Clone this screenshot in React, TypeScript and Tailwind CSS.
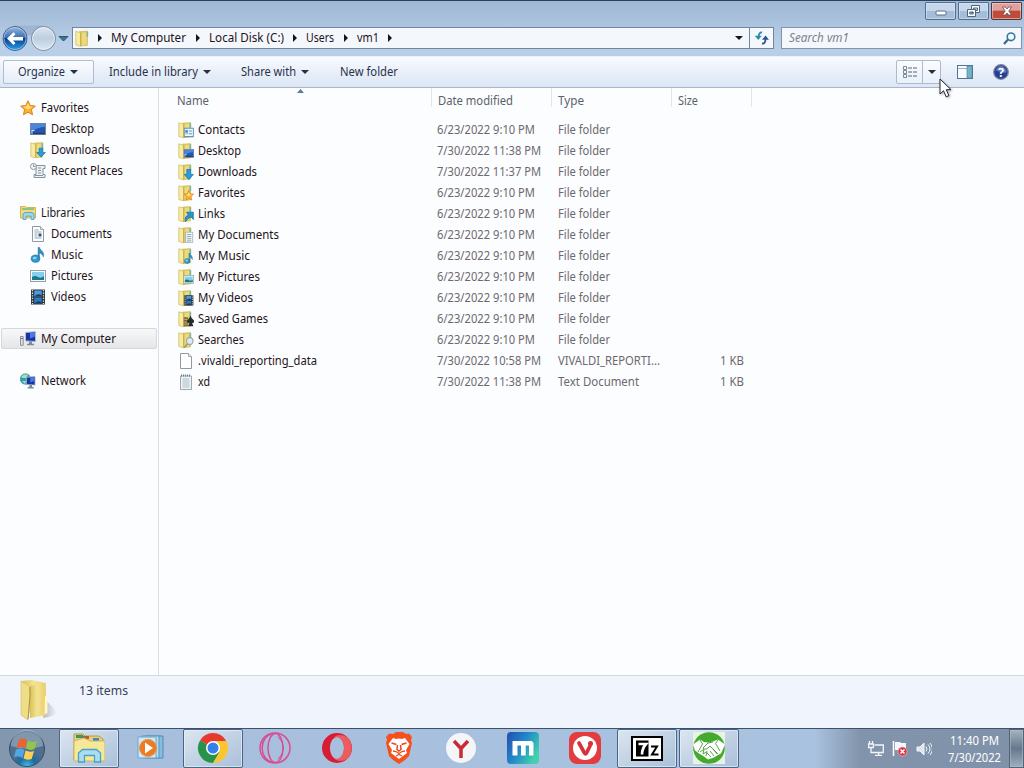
import type { ReactNode } from 'react'

type IconName =
  | 'contacts' | 'desktop' | 'downloads' | 'favorites' | 'links' | 'documents' | 'music'
  | 'pictures' | 'videos' | 'games' | 'searches' | 'blank' | 'text'

const files: { name: string; date: string; type: string; size?: string; icon: IconName; w: string }[] = [
  { name: 'Contacts', date: '6/23/2022 9:10 PM', type: 'File folder', icon: 'contacts', w: '47' },
  { name: 'Desktop', date: '7/30/2022 11:38 PM', type: 'File folder', icon: 'desktop', w: '43' },
  { name: 'Downloads', date: '7/30/2022 11:37 PM', type: 'File folder', icon: 'downloads', w: '59' },
  { name: 'Favorites', date: '6/23/2022 9:10 PM', type: 'File folder', icon: 'favorites', w: '47' },
  { name: 'Links', date: '6/23/2022 9:10 PM', type: 'File folder', icon: 'links', w: '27' },
  { name: 'My Documents', date: '6/23/2022 9:10 PM', type: 'File folder', icon: 'documents', w: '81' },
  { name: 'My Music', date: '6/23/2022 9:10 PM', type: 'File folder', icon: 'music', w: '52' },
  { name: 'My Pictures', date: '6/23/2022 9:10 PM', type: 'File folder', icon: 'pictures', w: '62' },
  { name: 'My Videos', date: '6/23/2022 9:10 PM', type: 'File folder', icon: 'videos', w: '55' },
  { name: 'Saved Games', date: '6/23/2022 9:10 PM', type: 'File folder', icon: 'games', w: '70' },
  { name: 'Searches', date: '6/23/2022 9:10 PM', type: 'File folder', icon: 'searches', w: '46' },
  { name: '.vivaldi_reporting_data', date: '7/30/2022 10:58 PM', type: 'VIVALDI_REPORTI...', size: '1 KB', icon: 'blank', w: '119' },
  { name: 'xd', date: '7/30/2022 11:38 PM', type: 'Text Document', size: '1 KB', icon: 'text', w: '12' },
]

/* Small 16px glyphs, shared by the sidebar and the folder overlays */
const Star = () => (
  <g>
    <path d="M8 .8l2.2 4.7 5.1.6-3.8 3.5 1 5.1L8 12.2l-4.5 2.5 1-5.1L.7 6.1l5.1-.6z" fill="#fbb12c" stroke="#d9741f" strokeWidth=".9" />
    <path d="M8 3l1.4 3.3 3 .5-4.400 2.700-4.400-2.700 3-.5z" fill="#ffe27a" />
  </g>
)
const Screen = () => (
  <g>
    <rect x=".5" y="2.5" width="15" height="11" fill="#2455b0" stroke="#6d87a8" />
    <path d="M1 3h14v3Q8 6 1 11z" fill="#4c86d8" />
    <path d="M1 12.5h14" stroke="#263c68" strokeWidth="1.4" />
    <path d="M2 13V9.5h2.5" stroke="#c8e2f8" fill="none" />
  </g>
)
const DownArrow = () => (
  <path d="M5 1h6v7h4l-7 7.5L1 8h4z" fill="#259fe0" stroke="#12669f" />
)
const Note = () => (
  <g>
    <ellipse cx="5.5" cy="11.7" rx="4.3" ry="3.6" fill="#2f9ad1" stroke="#236d9e" strokeWidth=".7" />
    <path d="M8 12V.3h1.500c.5 3 5.800 4.200 3.800 9.800-.8-2.700-2.300-3.600-3.800-3.800V12z" fill="#348fc4" stroke="#2a77a8" strokeWidth=".4" />
    <ellipse cx="4.7" cy="11" rx="2" ry="1.3" fill="#8ed2f0" />
  </g>
)
const Photo = () => (
  <g>
    <rect x=".5" y="2.5" width="15" height="11" fill="#f8fafb" stroke="#94a0a6" />
    <rect x="2" y="4" width="12" height="8" fill="#82d0eb" />
    <path d="M2 9q3-2 6 0t6-1v4H2z" fill="#207787" />
  </g>
)
const Film = () => (
  <g>
    <rect x="1" y=".5" width="14" height="15" fill="#29333e" />
    <path d="M2.5 1v14M13.5 1v14" stroke="#dce3e8" strokeWidth="1.3" strokeDasharray="1.3 1.3" />
    <rect x="4.3" y="1.5" width="7.4" height="6" fill="#4d9bdc" />
    <rect x="4.3" y="8.5" width="7.4" height="6" fill="#3179bd" />
    <path d="M4.3 7.5q4-4 7.4-1v1zM4.3 14.5q4-4 7.4-1v1z" fill="#203b60" />
  </g>
)
const Page = ({ lines = true }: { lines?: boolean }) => (
  <g>
    <path d="M2.5.5h8l3 3v12h-11z" fill="#fff" stroke="#9199a0" />
    <path d="M10.5.5v3h3" fill="#e6eaec" stroke="#9199a0" strokeWidth=".8" />
    {lines && <path d="M4.5 4h4M4.5 6h7M4.5 8h3M4.5 10h3M4.5 12h7" stroke="#859bb1" strokeWidth=".9" />}
    {lines && <path d="M8.5 7.5h3v3h-3z" fill="#405573" />}
  </g>
)

const overlays: Partial<Record<IconName, ReactNode>> = {
  contacts: (
    <g>
      <path d="M1 2h14v12H1z" fill="#eef9ff" stroke="#6493bb" strokeWidth="1.5" />
      <path d="M3 5h3v3H3zM3 10h4" fill="#4d8abc" stroke="#4d8abc" />
      <path d="M8 6h5M8 10h5" stroke="#5795c8" strokeWidth="1.5" />
    </g>
  ),
  desktop: <Screen />,
  downloads: <DownArrow />,
  favorites: <Star />,
  links: <path d="M3 15.500C1 10 4 7 7.500 6.500L4.500 2H15v10.500l-3-3C8 10 6 11 3 15.500z" fill="#2396cf" stroke="#1a678f" />,
  documents: (
    <g>
      <path d="M3 .5h11v15H3z" fill="#f7fafb" stroke="#8f9ca8" />
      <path d="M5 4h7M5 7h7M5 10h7M5 13h7" stroke="#7d93ab" strokeWidth="1.300" />
    </g>
  ),
  music: <Note />,
  pictures: <Photo />,
  videos: <Film />,
  games: (
    <g>
      <path d="M0 2h7v13H0z" fill="#7b6a35" /><path d="M1 5h5M1 9h5M1 12h5" stroke="#d6c67c" strokeWidth="1.200" />
      <path d="M10.500 0q-1 3-5 7-1 4 3.500 3l-2 5h8l-2-5q4 1 3.500-3-5-4-6-7z" fill="#252c2b" />
    </g>
  ),
  searches: (
    <g>
      <circle cx="9.500" cy="6" r="5" fill="#dcecec" stroke="#98a9a7" strokeWidth="1.8" />
      <path d="M6 10l-5 5.500" stroke="#879794" strokeWidth="2.200" />
    </g>
  ),
}

const FolderShape = () => (
  <g>
    <path d="M4 .8L12.800.3v14.900L5 15.700z" fill="#dcc45c" />
    <path d="M6 2l6-1.200v13.700L6 15.5z" fill="#ecda7e" stroke="#cdb652" strokeWidth=".5" />
    <path d="M.8.8l4.900 1.500v13.500L.8 14.500z" fill="#f6eb9f" stroke="#cfb95c" strokeWidth=".7" />
    <path d="M5.700 2.500v13" stroke="#bca546" strokeWidth=".8" />
    <path d="M11.500 1.200h1.700v5h-1.700z" fill="#7fb5a0" />
  </g>
)

function FileIcon({ name }: { name: IconName }) {
  return (
    <svg width="16" height="16" viewBox="0 0 16 16" className="shrink-0 overflow-visible">
      {name === 'blank' && <Page lines={false} />}
      {name === 'text' && (
        <g>
          <path d="M2.5 2h11v13.5h-11z" fill="#edf3f6" stroke="#9aa9b3" />
          <path d="M3 1.5h10" stroke="#707f89" strokeWidth="1.8" strokeDasharray="1 1" />
          <path d="M4.5 5h7M4.5 7h7M4.5 9h7M4.5 11h7M4.5 13h7" stroke="#9cb0bc" strokeWidth=".8" />
        </g>
      )}
      {name !== 'blank' && name !== 'text' && (
        <g>
          <FolderShape />
          <svg x="5.6" y="4.8" width="10.400" height="11.200" viewBox="0 0 16 16" preserveAspectRatio="none">{overlays[name]}</svg>
        </g>
      )}
    </svg>
  )
}

const Monitor = () => (
  <g>
    <path d="M5.5 1.5l10-.8v9.8l-10-.6z" fill="#1634a8" stroke="#b0b8c9" />
    <path d="M10 1.7l5-.4v4.2l-5 2z" fill="#4c79de" />
    <path d="M9 10.5h3v2.3h2v1.5H7v-1.5h2z" fill="#7e899b" />
  </g>
)

const sidebar: { label: string; icon: ReactNode; level: number; w: string; active?: boolean; gap?: boolean }[] = [
  { label: 'Favorites', icon: <Star />, level: 0, w: '48' },
  { label: 'Desktop', icon: <Screen />, level: 1, w: '43' },
  { label: 'Downloads', icon: <g><FolderShape /><svg x="6" y="5" width="10" height="11" viewBox="0 0 16 16"><DownArrow /></svg></g>, level: 1, w: '59' },
  {
    label: 'Recent Places', level: 1, w: '72',
    icon: (
      <g fill="none" stroke="#84939d">
        <path d="M6 2.5h9v3h-2v6h2v3H4v-3h2z" fill="#edf2f5" />
        <path d="M8 5h3M8 7.5h3M8 10h3M5 12.5h8" />
        <circle cx="3.5" cy="3.5" r="3" fill="#f8fbfc" />
        <path d="M3.5 1.5v2h2" />
      </g>
    ),
  },
  {
    label: 'Libraries', level: 0, w: '44', gap: true,
    icon: (
      <g>
        <path d="M.5 3V1.5h5l1 1h9V13H.5z" fill="#f3dc78" stroke="#d0b45c" />
        <path d="M2 4h12" stroke="#76b787" strokeWidth="1.5" />
        <path d="M3 14.5V8.8l2-1.3h7l2 1.3v5.7h-2.8v-3.3H6v3.3z" fill="#9ad8ea" stroke="#5598b7" strokeWidth=".8" />
      </g>
    ),
  },
  { label: 'Documents', icon: <Page />, level: 1, w: '61' },
  { label: 'Music', icon: <Note />, level: 1, w: '32' },
  { label: 'Pictures', icon: <Photo />, level: 1, w: '42' },
  { label: 'Videos', icon: <Film />, level: 1, w: '35' },
  {
    label: 'My Computer', level: 0, w: '75', gap: true, active: true,
    icon: <g><Monitor /><path d="M.5 5.5h2.7v8.8H.5z" fill="#dfe2e7" stroke="#8b919c" /><path d="M1 7.5h2" stroke="#777" /></g>,
  },
  {
    label: 'Network', level: 0, w: '45', gap: true,
    icon: (
      <g>
        <circle cx="5.5" cy="6" r="5.2" fill="#2ca1ac" stroke="#2a7cb0" strokeWidth=".6" />
        <path d="M1 4q3-4 7-2L6 5H3zM2 8h4l-1 3z" fill="#a5e0b3" />
        <svg x="4" y="3" width="12.500" height="13" viewBox="4 0 12 15"><Monitor /></svg>
      </g>
    ),
  },
]

/* A label stretched to an exact width, the way the shell font sets it */
function Label({ children, w, className = 'fill-[#1e1320]', italic }: { children: string; w: string; className?: string; italic?: boolean }) {
  return (
    <svg width={w} height="18" className={`shrink-0 overflow-visible text-[12px] ${className}`}>
      <text x="0" y="13" textLength={w} lengthAdjust="spacingAndGlyphs" fontStyle={italic ? 'italic' : undefined}>{children}</text>
    </svg>
  )
}

const Triangle = ({ right = false, color = '#27303f' }: { right?: boolean; color?: string }) => (
  <svg width={right ? 4 : 8} height={right ? 8 : 4} viewBox={right ? '0 0 4 8' : '0 0 8 4'} className="shrink-0">
    <path d={right ? 'M0 0l4 4-4 4z' : 'M0 0h8L4 4z'} fill={color} />
  </svg>
)

function WindowButtons() {
  const base = 'h-[18px] rounded-b-[2px] rounded-t-[1px] border border-[#536d8c] shadow-[inset_0_0_0_1px_#dce9f588] flex items-center justify-center'
  return (
    <div className="flex h-[25px] justify-end gap-[2px] pr-[2px] pt-px">
      <div className={`${base} w-[31px] bg-linear-to-b from-[#c6d7eb] from-50% to-[#a4bdd8] to-50%`}>
        <svg width="12" height="6" className="mt-[3px]"><rect x="1" y="1" width="10" height="4" rx="1" fill="#fff" stroke="#596c83" /></svg>
      </div>
      <div className={`${base} w-[31px] bg-linear-to-b from-[#c6d7eb] from-50% to-[#a4bdd8] to-50%`}>
        <svg width="13" height="12" fill="#f8fbff" stroke="#50647b">
          <path d="M4.5.5h8v7h-8zM6.5 3h4v2.5h-4z" fillRule="evenodd" />
          <path d="M.5 4.5h8v7h-8zM2.8 7h3.4v2H2.8z" fillRule="evenodd" />
        </svg>
      </div>
      <div className={`${base} w-[31px] border-[#60333c] bg-linear-to-b from-[#dfa29b] from-45% to-[#c24b38] to-50%`}>
        <svg width="12" height="10"><path d="M1.5 1h2.8L6 3l1.7-2h2.8L7.8 5l2.7 4H7.7L6 7 4.3 9H1.5l2.7-4z" fill="#fff" stroke="#684b55" strokeWidth=".8" /></svg>
      </div>
    </div>
  )
}

function AddressBar() {
  const crumbs = [['My Computer', '75'], ['Local Disk (C:)', '75'], ['Users', '28'], ['vm1', '22']]
  return (
    <div className="flex h-[24px] items-center">
      <svg width="73" height="28" viewBox="0 0 73 28" className="shrink-0 overflow-visible">
        <defs>
          <linearGradient id="back" x1="0" x2="0" y1="0" y2="1">
            <stop stopColor="#9cb9df" /><stop offset=".45" stopColor="#3d70b5" /><stop offset=".5" stopColor="#0c3c8f" /><stop offset="1" stopColor="#25a6eb" />
          </linearGradient>
          <linearGradient id="fwd" x1="0" x2="0" y1="0" y2="1">
            <stop stopColor="#dce6f1" /><stop offset=".5" stopColor="#bdcedf" /><stop offset="1" stopColor="#dde9f3" />
          </linearGradient>
        </defs>
        <path d="M15 1.500h28v10H15z" fill="#94aac6" opacity=".6" />
        <circle cx="15" cy="14.500" r="12" fill="url(#back)" stroke="#47658f" />
        <circle cx="15" cy="14.500" r="11" fill="none" stroke="#c2daf4" strokeOpacity=".6" />
        <path d="M7 14.500l6.500-6.300 2 2-2.600 2.700H23v3.500H12.900l2.600 2.700-2 2z" fill="#fff" />
        <circle cx="43.500" cy="14.500" r="12" fill="url(#fwd)" stroke="#73869f" />
        <circle cx="43.500" cy="14.500" r="11" fill="none" stroke="#f1f7fd" strokeOpacity=".7" />
        <path d="M59 12.500h9L63.500 17z" fill="#35799b" stroke="#2f566f" />
      </svg>
      <div className="flex h-[22px] w-[702px] shrink-0 items-center border border-[#71859e] bg-[#f4f8fd] -ml-px">
        <svg width="16" height="17" viewBox="0 0 16 16" className="ml-[2px] mr-[7px] shrink-0"><FolderShape /></svg>
        {crumbs.map(([text, w]) => (
          <div key={text} className="flex items-center">
            <Triangle right color="#10151e" />
            <div className="ml-[9px] mr-[9.600px] flex"><Label w={w}>{text}</Label></div>
          </div>
        ))}
        <Triangle right color="#10151e" />
        <div className="ml-auto mr-[6px]"><Triangle color="#10151e" /></div>
        <div className="flex h-full w-[24px] items-center justify-center border-l border-[#71859e]">
          <svg width="16" height="14" viewBox="0 0 16 14" fill="none">
            <path d="M8 1.500Q5 1 4.500 6" stroke="#2d8aad" strokeWidth="1.800" />
            <path d="M.8 4.800h7L4.300 9z" fill="#2d8aad" />
            <path d="M8 12.500Q11.500 13 11.500 8" stroke="#2c5590" strokeWidth="1.800" />
            <path d="M8 8.800h7L11.500 4.500z" fill="#2c5590" />
          </svg>
        </div>
      </div>
      <div className="ml-[7px] flex h-[22px] w-[241px] items-center justify-between border border-[#8293aa] bg-[#f4f8fd] pl-[7px] pr-[5px]">
        <Label w="60" italic className="fill-[#7c828c]">Search vm1</Label>
        <svg width="13" height="13" fill="none"><circle cx="8" cy="4.800" r="3.800" fill="#eefaff" stroke="#347aa5" strokeWidth="1.600" /><path d="M5 7.500L1 12" stroke="#3d668b" strokeWidth="2.200" /></svg>
      </div>
    </div>
  )
}

function Toolbar() {
  const text = 'fill-[#29324b]'
  return (
    <div className="mt-[6px] flex h-[32px] items-center border-b border-t border-b-[#a8b5cb] border-t-[#e9f2fb] bg-linear-to-b from-[#f8fbff] via-[#e9eff9] via-50% to-[#dce6f4] pl-[3px]">
      <div className="flex h-[24px] w-[91px] items-center gap-[5px] rounded-[2px] border border-[#b0bdce] bg-linear-to-b from-[#fafcff] to-[#e5edf8] pl-[14px]">
        <Label w="47" className={text}>Organize</Label><Triangle />
      </div>
      <div className="ml-[15px] flex items-center gap-[5px]"><Label w="89" className={text}>Include in library</Label><Triangle /></div>
      <div className="ml-[30px] flex items-center gap-[5px]"><Label w="55" className={text}>Share with</Label><Triangle /></div>
      <div className="ml-[31px] flex"><Label w="58" className={text}>New folder</Label></div>
      <div className="ml-auto flex h-[24px] w-[45px] rounded-[2px] border border-[#aebaca] bg-linear-to-b from-[#fafcff] to-[#e9f0f9]">
        <div className="flex w-[26px] items-center justify-center border-r border-[#aebaca]">
          <svg width="16" height="13" fill="none"><path d="M1.500.5h3v3h-3zM1.500 4.500h3v3h-3zM1.500 8.500h3v3h-3z" stroke="#7d8997" /><path d="M6 2h9M6 6h9M6 10h9" stroke="#59687b" strokeWidth="1.200" strokeDasharray="4 1" /></svg>
        </div>
        <div className="flex flex-1 items-center justify-center"><Triangle /></div>
      </div>
      <svg width="16" height="14" className="ml-[16px]"><rect x=".5" y=".5" width="15" height="13" fill="#f8fbfe" stroke="#57728e" /><path d="M1 3.500h9" stroke="#9ab2c8" /><rect x="10" y="1" width="5" height="12" fill="#75b3ca" stroke="#55849d" strokeWidth=".7" /></svg>
      <svg width="16" height="16" className="ml-[20px] mr-[15px]">
        <circle cx="8" cy="8" r="7.300" fill="#253f94" stroke="#7e879d" strokeWidth="1.300" />
        <path d="M3 6q2-4 5-4t5 4-5 2-5-2" fill="#7d97d2" opacity=".7" />
        <text x="8" y="12.500" textAnchor="middle" fontSize="12" fontWeight="700" fill="#fff">?</text>
      </svg>
    </div>
  )
}

function Sidebar() {
  return (
    <nav className="w-[159px] shrink-0 border-r border-[#d9dee8] pt-[9px]">
      {sidebar.map(item => (
        <div key={item.label} className={item.gap ? 'pt-[21px]' : ''}>
          <div className={`mx-px flex h-[21px] items-center gap-[5px] rounded-[2px] border ${item.active ? 'border-[#d6d7da] bg-linear-to-b from-[#f8f8f9] to-[#e5e6e8]' : 'border-transparent'} ${item.level ? 'pl-[28px]' : 'pl-[18px]'}`}>
            <svg width="16" height="16" viewBox="0 0 16 16" className="shrink-0">{item.icon}</svg>
            <Label w={item.w}>{item.label}</Label>
          </div>
        </div>
      ))}
    </nav>
  )
}

function FileList() {
  const gray = 'fill-[#6c6871]'
  const head = 'fill-[#5b616c]'
  const cols = 'grid grid-cols-[273px_120px_120px_80px]'
  return (
    <main className="relative flex-1">
      <svg width="7" height="4" className="absolute left-[138px] top-[1px]"><path d="M0 4l3.500-4L7 4z" fill="#5c7895" /></svg>
      <div className={`${cols} h-[19px]`}>
        {[['Name', '32'], ['Date modified', '75'], ['Type', '26'], ['Size', '20']].map(([t, w], i) => (
          <div key={t} className={`flex items-end border-r border-[#e2e6ec] ${i ? 'pl-[6px]' : 'pl-[18px]'}`}>
            <div className="-mb-[3px] flex"><Label w={w} className={head}>{t}</Label></div>
          </div>
        ))}
      </div>
      <div className="pt-[12px]">
        {files.map(f => (
          <div key={f.name} className={`${cols} h-[21px] items-center`}>
            <div className="flex items-center gap-[4px] pl-[19px]"><FileIcon name={f.icon} /><Label w={f.w}>{f.name}</Label></div>
            <div className="flex pl-[5px]"><Label w={f.date.length === 17 ? '98' : '104'} className={gray}>{f.date}</Label></div>
            <div className="flex pl-[6px]"><Label w={f.type === 'File folder' ? '52' : f.type === 'Text Document' ? '81' : '102'} className={gray}>{f.type}</Label></div>
            <div className="flex justify-end pr-[8px]">{f.size && <Label w="24" className={gray}>{f.size}</Label>}</div>
          </div>
        ))}
      </div>
    </main>
  )
}

function DetailsPane() {
  return (
    <footer className="flex h-[53px] border-t border-[#d0d8e5] bg-[#f0f4fc]">
      <svg width="42" height="44" viewBox="0 0 42 44" className="ml-[18px] mt-[3px]">
        <defs>
          <linearGradient id="fold"><stop stopColor="#d9c25c" /><stop offset=".5" stopColor="#f3e392" /><stop offset="1" stopColor="#ead273" /></linearGradient>
          <linearGradient id="shade"><stop stopColor="#8d949c" stopOpacity=".6" /><stop offset="1" stopColor="#8d949c" stopOpacity="0" /></linearGradient>
        </defs>
        <path d="M28 22q6 4 11 12-5 4-14 5z" fill="url(#shade)" />
        <path d="M3 2l10-1 15 3v32l-15 3z" fill="url(#fold)" />
        <path d="M12 7l14-3v31l-14 4z" fill="url(#fold)" />
        <path d="M27 17h2.500v17l-3 1z" fill="#fff7c9" />
        <path d="M3 2l8.500 5 .5 7-2 27-7-5z" fill="#f0dd88" stroke="#d3b95f" strokeWidth=".6" />
        <path d="M11.800 8l.3 8-2 24" fill="none" stroke="#ad9644" strokeWidth="1" />
      </svg>
      <div className="ml-[19px] mt-[6px]"><Label w="49" className="fill-[#39415a]">13 items</Label></div>
    </footer>
  )
}

const apps: { name: string; open?: boolean; art: ReactNode }[] = [
  {
    name: 'explorer', open: true,
    art: (
      <g>
        <path d="M1 6V2h9l2 2h14l4 3v21H1z" fill="#e8cf73" stroke="#b49c50" />
        <path d="M3 3h7v3H3z" fill="#369765" /><path d="M10 4h6v3h-6z" fill="#b65d38" /><path d="M20 6h6v3h-6z" fill="#4a83c1" />
        <path d="M1 9l10-3 6 3h15v20H1z" fill="#f5e898" stroke="#cbb765" />
        <path d="M5.500 30V21l4-3.500h14l4 3.500v9h-6v-6.500h-10V30z" fill="#a9ddf1" stroke="#4f9fc5" strokeWidth="1.300" />
      </g>
    ),
  },
  {
    name: 'player',
    art: (
      <g>
        <path d="M10 4h18v22H10z" fill="#8bbdda" stroke="#4f8bb4" /><path d="M7 4h17v22H7z" fill="#b5dced" stroke="#5595bb" /><path d="M3 5h18v21H3z" fill="#d0e8f3" stroke="#6da5c4" />
        <circle cx="13" cy="16" r="8.500" fill="#ee7b20" stroke="#d99662" /><path d="M10 10.500l8 5.500-8 5.500z" fill="#fff" />
      </g>
    ),
  },
  {
    name: 'chrome', open: true,
    art: (
      <g>
        <path d="M16 16L3 8.500A15 15 0 0 1 29 8.500z" fill="#e63a2e" />
        <path d="M16 16L3 8.500A15 15 0 0 0 16 31l7-11z" fill="#26934b" />
        <path d="M16 9h13.300A15 15 0 0 1 16 31l7-12z" fill="#fcc52c" />
        <circle cx="16" cy="16" r="7" fill="#fff" /><circle cx="16" cy="16" r="5.500" fill="#347fe8" />
      </g>
    ),
  },
  {
    name: 'opera-gx',
    art: (
      <g fill="none" stroke="#d94c92" strokeWidth="1.500">
        <circle cx="16" cy="16" r="15" />
        <ellipse cx="16.500" cy="16" rx="7.500" ry="14.500" />
        <path d="M14 1.500C-.5 4-.5 28 14 30.500" />
        <path d="M19 4.500q11 11.500 0 23" strokeWidth="1" />
      </g>
    ),
  },
  {
    name: 'opera',
    art: (
      <g>
        <path d="M16 1a15 15 0 1 0 0 30 15 15 0 1 0 0-30zm0 4c4 0 7 5 7 11s-3 11-7 11-7-5-7-11 3-11 7-11z" fill="#d81c34" fillRule="evenodd" />
        <path d="M12.500 5.500Q18 1 26 5a15 15 0 0 1 0 22q-8 4-13.500-.5C26 31 27 1 12.500 5.500z" fill="#ec5b5e" />
      </g>
    ),
  },
  {
    name: 'brave',
    art: (
      <g>
        <path d="M10 2l3-2h7l3 2 3-.5L29 5l-1 3 1 3-3 13-4 4-6 4-6-4-4-4L3 11l1-3-1-3 3-3.500z" fill="#f4511e" />
        <path d="M10 6l3 1q3-1 6 0l3-1 4.500 6-3.500 6 1 3-8 6-8-6 1-3-3.500-6z" fill="#fff" />
        <path d="M8.500 11l5 1.500M23.500 11l-5 1.500M14.500 13l-.5 4.500 2 1.500 2-1.500-.5-4.500" fill="none" stroke="#e94720" strokeWidth="1.500" />
        <path d="M10 19l3 .5 3 2 3-2 3-.5M13 24l3-1.500 3 1.500" fill="none" stroke="#ea4e1b" strokeWidth="1.300" />
      </g>
    ),
  },
  {
    name: 'yandex',
    art: <g><circle cx="16" cy="16" r="15" fill="#f4f5f7" /><path d="M9 9l7 7.500V26M23 9l-7 7.500" fill="none" stroke="#c92937" strokeWidth="3.500" /></g>,
  },
  {
    name: 'maxthon',
    art: (
      <g>
        <defs><linearGradient id="mx" x1="0" y1="0" x2="1" y2=".6"><stop stopColor="#254baf" /><stop offset=".5" stopColor="#2286ca" /><stop offset="1" stopColor="#42d0ad" /></linearGradient></defs>
        <rect width="32" height="32" rx="4" fill="url(#mx)" />
        <path d="M5.500 23.500V9H25l1.500 2v12.500H22V13.500h-3.300v10H14v-10h-3.500v10z" fill="#fff" />
      </g>
    ),
  },
  {
    name: 'vivaldi',
    art: <g><rect width="32" height="32" rx="8" fill="#e33b3e" /><circle cx="16" cy="16" r="12" fill="#fff" /><path d="M10 11l5.500 10q1 2 2 0L21 14" fill="none" stroke="#d93138" strokeWidth="3.700" strokeLinecap="round" /><circle cx="21.500" cy="11.500" r="2.500" fill="#d93138" /></g>,
  },
  {
    name: 'seven-zip', open: true,
    art: (
      <g>
        <rect x="1" y="5" width="30" height="23" fill="#fff" stroke="#000" strokeWidth="2" />
        <path d="M5 8.500h12.500v16H5z" /><path d="M7.500 12h7.500q-4 4.500-4 10.500" fill="none" stroke="#fff" strokeWidth="2.700" />
        <path d="M20 14.500h6l-5 8h6.500" fill="none" stroke="#000" strokeWidth="2" />
      </g>
    ),
  },
  {
    name: 'handshake', open: true,
    art: (
      <g>
        <rect width="32" height="32" fill="#e9f3e4" /><circle cx="16" cy="16" r="15.800" fill="#44aa2d" />
        <path d="M0 12.500L7 7.500l4 2.500 4 .5 5-1 5-2 7 5-4 9-4 2-3 2-3 1-3 1-4-3-5-3-4-3z" fill="#fff" />
        <path d="M7 8l2.500 4L5 20M25 8l-2.500 3.500L27 19M15 11l-5 5q3 3 7-2l8 8M15 11l5-1M20 17l4 5M17 19l4 5M14 21l4 4M7 20l4-3-1 5 4-2.500-1 4.500" fill="none" stroke="#469a35" strokeWidth=".9" />
      </g>
    ),
  },
]

function Taskbar() {
  return (
    <div className="flex h-[40px] items-stretch border-t border-[#3b506b] bg-[linear-gradient(90deg,#8397af_0,#8397af_57px,#a7bfdc_118px,#a9c2e0_815px,#8294ab_860px,#8092a9_100%)]">
      <div className="flex w-[59px] items-center pl-[8px]">
        <svg width="38" height="38" viewBox="0 0 38 38">
          <defs><radialGradient id="orb" cx=".5" cy="1"><stop stopColor="#40c5ef" /><stop offset=".5" stopColor="#1e6c9e" /><stop offset="1" stopColor="#516f8c" /></radialGradient></defs>
          <circle cx="19" cy="19" r="17.500" fill="url(#orb)" stroke="#304f6d" />
          <path d="M3 16a16 16 0 0 1 32 0q-16 5-32 0z" fill="#d8e4ec" opacity=".35" />
          <path d="M11 9.500q4.500-2 8 .5l-2 8.500q-4-2.500-8.500-.5z" fill="#ed6330" /><path d="M20 10.500q4 2.500 9 .5l-2.500 8q-4.500 2-8.500-.5z" fill="#91c64b" />
          <path d="M8 19.500q4.500-2 8.500.5l-2 8q-4-2.500-8.500-.5z" fill="#52a7e3" /><path d="M17.500 20.500q4 2 8.500.5l-2.300 8q-4.500 1.500-8.200-.5z" fill="#ffd054" />
        </svg>
      </div>
      <div className="flex gap-[2px]">
        {apps.map(app => (
          <div key={app.name} className={`flex w-[60px] justify-center rounded-[2px] border pt-[2px] ${app.open ? 'border-[#4c6584] bg-linear-to-br from-[#dce6f0] to-[#a9bfd9] shadow-[inset_0_0_0_1px_#e8f1f9aa]' : 'border-transparent'}`}>
            <svg width="32" height="32" viewBox="0 0 32 32">{app.art}</svg>
          </div>
        ))}
      </div>
      <div className="ml-auto flex items-center gap-[8px]">
        <svg width="16" height="16" fill="none" stroke="#f2f6f9" strokeWidth="1.300"><path d="M6.500 4h8.800v7.500h-9M7 14.300h7M10.700 11.500v3M1.500 0v3M4.500 0v3M.6 3h4.800v3.500H.6zM3 6.500v5h4" /></svg>
        <svg width="17" height="17"><path d="M1.500 1v15" stroke="#fff" strokeWidth="1.500" /><path d="M3 2h5l1 1h5v7H3z" fill="#f4f7fb" /><circle cx="10.500" cy="11.500" r="4.500" fill="#d93440" stroke="#f4c7ca" strokeWidth=".6" /><path d="M8.500 9.500l4 4m0-4l-4 4" stroke="#fff" strokeWidth="1.500" /></svg>
        <svg width="16" height="16" className="-ml-px" fill="none" stroke="#f4f7fa"><path d="M1 6h3l4-4v12l-4-4H1z" fill="#dce5ed" /><path d="M10 5.500q2 2.500 0 5M12 3.500q4 4.500 0 9M14 2q5 6 0 12" /></svg>
      </div>
      <div className="ml-[15px] flex w-[54px] flex-col items-center pt-[3px] [&>svg]:-mb-px">
        <Label w="49" className="fill-white">11:40 PM</Label>
        <Label w="53" className="fill-white">7/30/2022</Label>
      </div>
      <div className="ml-[8px] w-[15px] border border-[#52647a] bg-linear-to-b from-[#a6b3c0] via-[#66788b] to-[#a0afbe] shadow-[inset_0_0_0_1px_#afbdca88]" />
    </div>
  )
}

export default function App() {
  return (
    <div className="relative flex h-[768px] w-[1024px] flex-col overflow-hidden bg-[#fcfdfe] font-['Noto_Sans','Open_Sans',sans-serif]">
      <header className="border-t border-[#2b415e] bg-linear-to-b from-[#9eb7d3] via-[#b9cfe8] to-[#bacde4]">
        <WindowButtons />
        <AddressBar />
        <Toolbar />
      </header>
      <div className="flex min-h-0 flex-1">
        <Sidebar />
        <FileList />
      </div>
      <DetailsPane />
      <Taskbar />
      <svg width="14" height="21" className="absolute left-[939px] top-[78px] drop-shadow-[1px_1px_1px_#0005]">
        <path d="M1 1v15l3.500-3.300 2.700 6.100 2.700-1.200-2.600-5.900H12z" fill="#fff" stroke="#202632" />
      </svg>
    </div>
  )
}
